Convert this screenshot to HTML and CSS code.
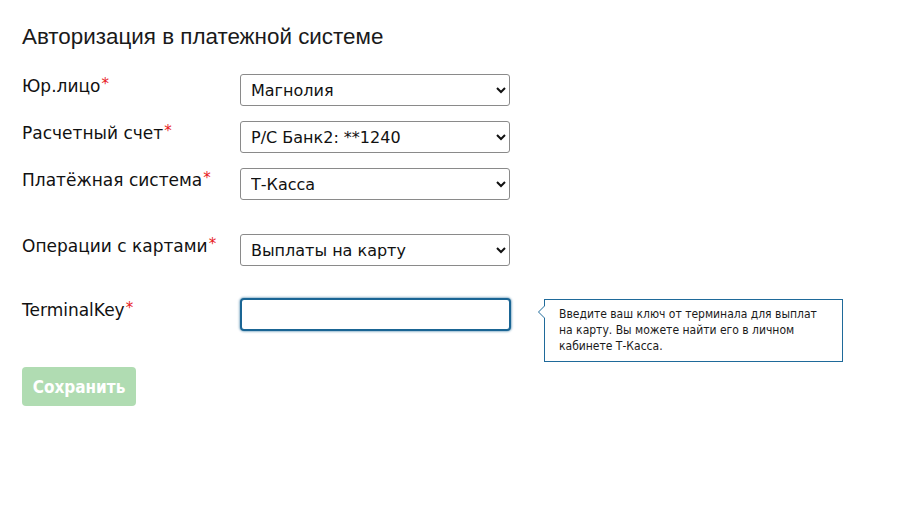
FILE: index.html
```html
<!DOCTYPE html>
<html lang="ru">
<head>
<meta charset="utf-8">
<title>Авторизация в платежной системе</title>
<link rel="stylesheet" href="styles.css">
</head>
<body>
<div class="page">
  <h1 class="title">Авторизация в платежной системе</h1>
  <form class="form">
    <div class="row row-a">
      <label class="label">Юр.лицо<span class="req">*</span></label>
      <select class="field"><option>Магнолия</option></select>
    </div>
    <div class="row row-a">
      <label class="label">Расчетный счет<span class="req">*</span></label>
      <select class="field"><option>Р/С Банк2: **1240</option></select>
    </div>
    <div class="row row-b">
      <label class="label">Платёжная система<span class="req">*</span></label>
      <select class="field"><option>Т-Касса</option></select>
    </div>
    <div class="row row-c">
      <label class="label">Операции с картами<span class="req">*</span></label>
      <select class="field"><option>Выплаты на карту</option></select>
    </div>
    <div class="row row-d">
      <label class="label">TerminalKey<span class="req">*</span></label>
      <input class="field input focused" type="text">
      <div class="tip">Введите ваш ключ от терминала для выплат на карту. Вы можете найти его в личном кабинете Т-Касса.</div>
    </div>
    <button type="button" class="save" disabled>Сохранить</button>
  </form>
</div>
</body>
</html>
```

FILE: styles.css
```css
html, body {
  margin: 0;
  padding: 0;
  background: #fff;
}
.page {
  padding: 24px 0 0 22px;
  font-family: "DejaVu Sans", sans-serif;
  color: #111;
}
.title {
  margin: 0 0 24px 0;
  font-family: "Liberation Sans", Arial, sans-serif;
  font-weight: normal;
  font-size: 22.4px;
  line-height: 26px;
  color: #1a1a1a;
}
.form {
  display: flex;
  flex-direction: column;
  align-items: flex-start;
}
.row {
  display: flex;
  align-items: flex-start;
}
.row-a { margin-bottom: 15px; }
.row-b { margin-bottom: 34px; }
.row-c { margin-bottom: 32px; }
.row-d { margin-bottom: 5px; }
.label {
  width: 218px;
  font-size: 17px;
  line-height: 21px;
  color: #111;
}
.req {
  color: #e8201c;
  font-size: 15px;
  vertical-align: 3px;
  margin-left: 1px;
}
.field {
  box-sizing: border-box;
  width: 270px;
  height: 32px;
  margin: 0;
  font-family: "DejaVu Sans", sans-serif;
  font-size: 16px;
  color: #111;
  background: #fff;
  border: 1px solid #8a8a8a;
  border-radius: 3px;
  padding: 0 4px 0 6px;
}
.input {
  height: 33px;
  width: 271px;
}
.focused {
  border: 2px solid #1a6594;
  border-radius: 4px;
  outline: none;
  box-shadow: 0 0 2px 1px rgba(26, 101, 148, 0.45);
}
.tip {
  position: relative;
  box-sizing: border-box;
  width: 299px;
  height: 63px;
  margin-left: 33px;
  margin-top: 1px;
  padding: 6px 10px 0 14px;
  border: 1px solid #1f6a9a;
  background: #fff;
  font-family: "DejaVu Sans Condensed", "DejaVu Sans", sans-serif;
  font-size: 12px;
  line-height: 16px;
  color: #1a1a1a;
}
.tip::before {
  content: "";
  position: absolute;
  left: -7px;
  top: 5px;
  border-style: solid;
  border-width: 7px 7px 7px 0;
  border-color: transparent #1f6a9a transparent transparent;
}
.tip::after {
  content: "";
  position: absolute;
  left: -6px;
  top: 6px;
  border-style: solid;
  border-width: 6px 6px 6px 0;
  border-color: transparent #fff transparent transparent;
}
.save {
  width: 114px;
  height: 39px;
  background: #b0dcb2;
  color: #fff;
  border: none;
  border-radius: 4px;
  font-family: "DejaVu Sans Condensed", "DejaVu Sans", sans-serif;
  font-weight: bold;
  font-size: 17px;
  padding: 0;
}
```
